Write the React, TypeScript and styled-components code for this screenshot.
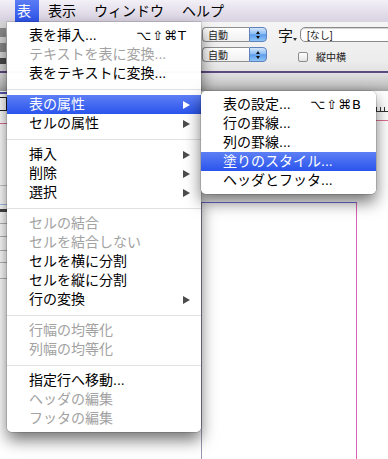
import React from "react";
import styled, { createGlobalStyle } from "styled-components";

const GlobalStyle = createGlobalStyle`
  html, body { margin: 0; padding: 0; background: #fff; }
  body {
    font-family: "Liberation Sans", "Noto Sans CJK JP", sans-serif;
    overflow: hidden;
  }
`;

const Screen = styled.div`
  position: relative;
  width: 388px;
  height: 459px;
  overflow: hidden;
  display: flex;
  flex-direction: column;
  background: #fff;
`;

/* ---------- menu bar ---------- */
const MenuBar = styled.div`
  flex: none;
  height: 22px;
  display: flex;
  align-items: stretch;
  padding-left: 15px;
  background: linear-gradient(#f3f0f7, #e2dde9 60%, #d9d3e2);
`;

const MenuTitle = styled.div<{ $active?: boolean }>`
  display: flex;
  align-items: center;
  padding: ${(p) => (p.$active ? "0 8px 0 2px" : "0 9px")};
  font-size: 14px;
  line-height: 22px;
  color: ${(p) => (p.$active ? "#fff" : "#000")};
  background: ${(p) =>
    p.$active ? "linear-gradient(#5b7cf4, #2c53ea)" : "transparent"};
`;

/* ---------- control panel ---------- */
const Toolbar = styled.div`
  flex: none;
  height: 49px;
  display: flex;
  align-items: flex-start;
  background: linear-gradient(#f5f5f5, #ececec 80%, #e2e2e2);
`;

const ToolStub = styled.div`
  flex: none;
  width: 7px;
  height: 49px;
  display: flex;
  flex-direction: column;
  gap: 6px;
  padding-top: 6px;
  box-sizing: border-box;
  background: #d9d9d9;
`;

const StubMark = styled.div<{ $h: number; $dark?: boolean }>`
  height: ${(p) => p.$h}px;
  background: ${(p) => (p.$dark ? "#4a4a4a" : "#8a8a8a")};
  width: 6px;
`;

const PopupStack = styled.div`
  margin-left: 195px;
  padding-top: 5px;
  display: flex;
  flex-direction: column;
  gap: 5px;
`;

const Popup = styled.div`
  width: 65px;
  height: 15px;
  display: flex;
`;

const PopupBody = styled.div`
  flex: 1;
  display: flex;
  align-items: center;
  padding-left: 5px;
  border: 1px solid #8e8e8e;
  border-right: none;
  border-radius: 4px 0 0 4px;
  background: linear-gradient(#ffffff, #f1f1f1);
  font-size: 10px;
  color: #222;
`;

const Stepper = styled.div`
  width: 16px;
  display: flex;
  flex-direction: column;
  align-items: center;
  justify-content: center;
  gap: 2px;
  border: 1px solid #5f82bd;
  border-radius: 0 4px 4px 0;
  background: linear-gradient(#d3e6fb, #8dbdf2 45%, #5b9ceb 52%, #8fc5f7);
`;

const Tri = styled.span<{ $down?: boolean }>`
  width: 0;
  height: 0;
  border-left: 2.5px solid transparent;
  border-right: 2.5px solid transparent;
  ${(p) =>
    p.$down ? "border-top: 3px solid #111;" : "border-bottom: 3px solid #111;"}
`;

const VDivider = styled.div`
  margin: 3px 0 0 5px;
  width: 1px;
  height: 40px;
  background: #b2b2b2;
  box-shadow: 1px 0 0 #ffffff;
`;

const CharGroup = styled.div`
  margin-left: 6px;
  padding-top: 5px;
  display: flex;
  flex-direction: column;
  gap: 10px;
`;

const CharRow = styled.div<{ $indent?: number }>`
  display: flex;
  align-items: center;
  padding-left: ${(p) => p.$indent || 0}px;
  height: 15px;
`;

const CheckRow = styled.div`
  display: flex;
  align-items: flex-start;
  padding-left: 20px;
  height: 12px;
`;

const CharGlyph = styled.span`
  font-family: "Noto Sans CJK JP", sans-serif;
  font-size: 15px;
  line-height: 15px;
  color: #111;
`;

const MiniTri = styled.span`
  align-self: flex-end;
  margin: 0 3px 1px 0;
  width: 0;
  height: 0;
  border-left: 2px solid transparent;
  border-right: 2px solid transparent;
  border-top: 3px solid #333;
`;

const Combo = styled.div`
  width: 100px;
  height: 15px;
  box-sizing: border-box;
  display: flex;
  align-items: center;
  padding-left: 6px;
  border: 1px solid #8a8a8a;
  border-radius: 5px 0 0 5px;
  background: #fff;
  box-shadow: inset 0 1px 1px rgba(0, 0, 0, 0.18);
  font-size: 10px;
  color: #222;
`;

const CheckBox = styled.span`
  width: 10px;
  height: 10px;
  box-sizing: border-box;
  border: 1px solid #8c8c8c;
  border-radius: 2px;
  background: linear-gradient(#ffffff, #e4e4e4);
`;

const CheckLabel = styled.span`
  margin-left: 8px;
  font-size: 10px;
  line-height: 11px;
  color: #222;
`;

const AccentLine = styled.div`
  flex: none;
  height: 2px;
  background: #5c4b7e;
`;

const TabBar = styled.div`
  flex: none;
  height: 18px;
  background: linear-gradient(#e2deea, #dcdcdc 15%, #c4c4c4 65%, #a6a6a6);
`;

/* ---------- document area ---------- */
const Workspace = styled.div`
  flex: 1;
  display: flex;
  align-items: flex-start;
  background: #fff;
`;

const LeftStrip = styled.div`
  flex: none;
  width: 7px;
  display: flex;
  flex-direction: column;
`;

const StripLine = styled.div<{ $top: number; $color: string; $h?: number }>`
  margin-top: ${(p) => p.$top}px;
  height: ${(p) => p.$h || 1}px;
  background: ${(p) => p.$color};
`;

const StripBox = styled.div`
  margin-top: 3px;
  height: 14px;
  box-sizing: border-box;
  border: 1px solid #222;
  border-left: none;
`;

const Page = styled.div`
  flex: none;
  margin: 111px 0 0 194px;
  width: 156px;
  height: 300px;
  box-sizing: border-box;
  border-left: 1px solid #9896b0;
  border-top: 1px solid #6f6fdc;
  border-right: 1px solid #d662b6;
`;

const RightStrip = styled.div`
  flex: none;
  margin-left: 19px;
  width: 12px;
  display: flex;
  flex-direction: column;
`;

const Ticks = styled.div`
  margin-top: 16px;
  height: 4px;
  border-bottom: 1px solid #333;
  background: repeating-linear-gradient(
    90deg,
    #333 0 1px,
    transparent 1px 4px
  );
`;

/* ---------- menus ---------- */
const Dropdown = styled.div`
  position: absolute;
  top: 22px;
  left: 7px;
  width: 194px;
  padding: 4px 0;
  background: rgba(255, 255, 255, 0.98);
  border-radius: 0 0 5px 5px;
  box-shadow: 0 8px 16px rgba(0, 0, 0, 0.55), 0 0 0 0.5px rgba(0, 0, 0, 0.25);
  z-index: 10;
`;

const Submenu = styled.div`
  position: absolute;
  top: 91px;
  left: 201px;
  width: 175px;
  padding: 4px 0;
  background: rgba(255, 255, 255, 0.98);
  border-radius: 5px;
  box-shadow: 0 8px 16px rgba(0, 0, 0, 0.55), 0 0 0 0.5px rgba(0, 0, 0, 0.25);
  z-index: 11;
`;

const Item = styled.div<{ $disabled?: boolean; $selected?: boolean }>`
  height: 19px;
  display: flex;
  align-items: center;
  justify-content: space-between;
  padding: 0 11px 0 22px;
  font-size: 14px;
  line-height: 19px;
  white-space: nowrap;
  color: ${(p) => (p.$selected ? "#fff" : p.$disabled ? "#a2a2a2" : "#000")};
  background: ${(p) =>
    p.$selected ? "linear-gradient(#5d7ff5, #2a54ec)" : "transparent"};
`;

const Separator = styled.div`
  height: 1px;
  margin: 6px 0 5px;
  background: #e1e1e1;
`;

const Arrow = styled.span<{ $light?: boolean }>`
  width: 0;
  height: 0;
  border-left: 7px solid ${(p) => (p.$light ? "#fff" : "#4c4c4c")};
  border-top: 4.5px solid transparent;
  border-bottom: 4.5px solid transparent;
`;

const Shortcut = styled.span`
  font-family: "DejaVu Sans", sans-serif;
  font-size: 13px;
  letter-spacing: 1px;
  margin-right: 3px;
`;

type Entry =
  | { sep: true }
  | {
      sep?: false;
      label: string;
      disabled?: boolean;
      selected?: boolean;
      sub?: boolean;
      key?: string;
    };

const mainItems: Entry[] = [
  { label: "表を挿入...", key: "⌥⇧⌘T" },
  { label: "テキストを表に変換...", disabled: true },
  { label: "表をテキストに変換..." },
  { sep: true },
  { label: "表の属性", sub: true, selected: true },
  { label: "セルの属性", sub: true },
  { sep: true },
  { label: "挿入", sub: true },
  { label: "削除", sub: true },
  { label: "選択", sub: true },
  { sep: true },
  { label: "セルの結合", disabled: true },
  { label: "セルを結合しない", disabled: true },
  { label: "セルを横に分割" },
  { label: "セルを縦に分割" },
  { label: "行の変換", sub: true },
  { sep: true },
  { label: "行幅の均等化", disabled: true },
  { label: "列幅の均等化", disabled: true },
  { sep: true },
  { label: "指定行へ移動..." },
  { label: "ヘッダの編集", disabled: true },
  { label: "フッタの編集", disabled: true },
];

const subItems: Entry[] = [
  { label: "表の設定...", key: "⌥⇧⌘B" },
  { label: "行の罫線..." },
  { label: "列の罫線..." },
  { label: "塗りのスタイル...", selected: true },
  { label: "ヘッダとフッタ..." },
];

const renderEntries = (entries: Entry[]) =>
  entries.map((e, i) =>
    e.sep ? (
      <Separator key={i} />
    ) : (
      <Item key={i} $disabled={e.disabled} $selected={e.selected}>
        <span>{e.label}</span>
        {e.key && <Shortcut>{e.key}</Shortcut>}
        {e.sub && <Arrow $light={e.selected} />}
      </Item>
    )
  );

const StepPopup = ({ text }: { text: string }) => (
  <Popup>
    <PopupBody>{text}</PopupBody>
    <Stepper>
      <Tri />
      <Tri $down />
    </Stepper>
  </Popup>
);

export default function App() {
  return (
    <>
      <GlobalStyle />
      <Screen>
        <MenuBar>
          <MenuTitle $active>表</MenuTitle>
          <MenuTitle>表示</MenuTitle>
          <MenuTitle>ウィンドウ</MenuTitle>
          <MenuTitle>ヘルプ</MenuTitle>
        </MenuBar>

        <Toolbar>
          <ToolStub>
            <StubMark $h={9} />
            <StubMark $h={9} />
            <StubMark $h={6} $dark />
          </ToolStub>
          <PopupStack>
            <StepPopup text="自動" />
            <StepPopup text="自動" />
          </PopupStack>
          <VDivider />
          <CharGroup>
            <CharRow>
              <CharGlyph>字</CharGlyph>
              <MiniTri />
              <Combo>[なし]</Combo>
            </CharRow>
            <CheckRow>
              <CheckBox />
              <CheckLabel>縦中横</CheckLabel>
            </CheckRow>
          </CharGroup>
        </Toolbar>
        <AccentLine />
        <TabBar />

        <Workspace>
          <LeftStrip>
            <StripLine $top={1} $color="#5a5ab0" $h={2} />
            <StripBox />
            <StripLine $top={12} $color="#e07090" />
            <StripLine $top={61} $color="#c8c8c8" />
            <StripLine $top={18} $color="#a9c3ea" />
            <StripLine $top={4} $color="#444" $h={3} />
            <StripLine $top={11} $color="#b5b5b5" />
            <StripLine $top={12} $color="#b5b5b5" />
            <StripLine $top={13} $color="#b5b5b5" />
            <StripLine $top={11} $color="#b5b5b5" />
            <StripLine $top={15} $color="#b5b5b5" />
          </LeftStrip>
          <Page />
          <RightStrip>
            <Ticks />
            <StripLine $top={8} $color="#e07090" />
          </RightStrip>
        </Workspace>

        <Dropdown>{renderEntries(mainItems)}</Dropdown>
        <Submenu>{renderEntries(subItems)}</Submenu>
      </Screen>
    </>
  );
}
